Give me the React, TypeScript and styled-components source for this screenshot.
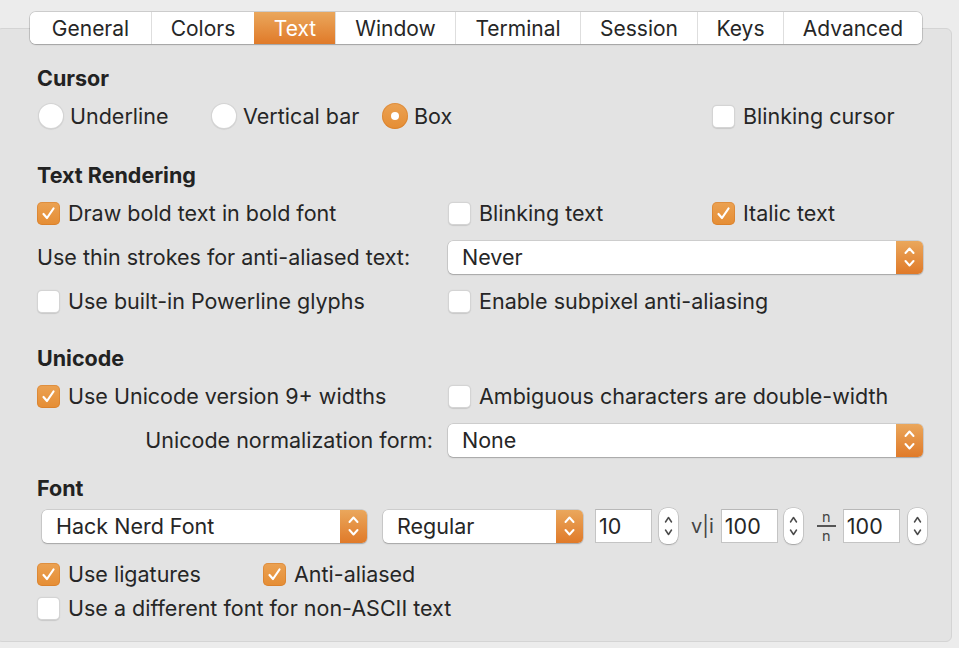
import React from 'react';
import styled, { createGlobalStyle } from 'styled-components';

const GlobalStyle = createGlobalStyle`
  html, body {
    margin: 0;
    padding: 0;
    background: #ececec;
  }
  body {
    font-family: Inter, "Noto Sans", "Liberation Sans", sans-serif;
    color: #262626;
    -webkit-font-smoothing: antialiased;
  }
`;

const Window = styled.div`
  width: 959px;
  height: 648px;
  overflow: hidden;
  padding-top: 12px;
  box-sizing: border-box;
  background: #ececec;
`;

const TabBar = styled.div`
  position: relative;
  z-index: 1;
  display: flex;
  justify-content: center;
  width: 952px;
  margin-bottom: -16px;
`;

const Tabs = styled.div`
  display: flex;
  height: 32px;
  background: #fff;
  border-radius: 6px;
  box-shadow: 0 0 0 1px rgba(0, 0, 0, 0.13), 0 1px 1.5px rgba(0, 0, 0, 0.18);
  overflow: hidden;
`;

const Tab = styled.div<{ $w: number; $active?: boolean }>`
  width: ${(p) => p.$w}px;
  display: flex;
  align-items: center;
  justify-content: center;
  font-size: 21px;
  color: ${(p) => (p.$active ? '#fff' : '#262626')};
  background: ${(p) => (p.$active ? 'linear-gradient(#eaa75c, #e07a29)' : '#fff')};
  border-left: 1px solid ${(p) => (p.$active ? 'transparent' : '#dedede')};
  box-sizing: border-box;

  &:first-child {
    border-left: none;
  }
`;

const Panel = styled.div`
  margin-left: -4px;
  width: 956px;
  height: 614px;
  box-sizing: border-box;
  padding: 36px 28px 0 41px;
  background: #e3e3e3;
  border: 1px solid #d4d4d4;
  border-radius: 6px;
`;

const Section = styled.section<{ $mt?: number }>`
  margin-top: ${(p) => p.$mt ?? 0}px;
`;

const Heading = styled.h3`
  margin: 0 0 8px -1px;
  height: 26px;
  line-height: 26px;
  font-size: 21.5px;
  font-weight: 700;
  color: #222;
`;

const Grid = styled.div`
  display: grid;
  grid-template-columns: 411px 264px 1fr;
  grid-auto-rows: 34px;
  row-gap: 10px;
  margin-left: -1px;
`;

const Cell = styled.div<{ $span?: string; $end?: boolean }>`
  display: flex;
  align-items: center;
  grid-column: ${(p) => p.$span ?? 'auto'};
  justify-content: ${(p) => (p.$end ? 'flex-end' : 'flex-start')};
  padding-right: ${(p) => (p.$end ? '15px' : '0')};
`;

const Label = styled.span`
  font-size: 21.5px;
  color: #262626;
  white-space: nowrap;
`;

const Option = styled.label<{ $w?: number }>`
  display: flex;
  align-items: center;
  gap: 8px;
  width: ${(p) => (p.$w ? `${p.$w}px` : 'auto')};
  flex: none;
`;

const Box = styled.span<{ $on?: boolean }>`
  width: 23px;
  height: 23px;
  border-radius: 5px;
  box-sizing: border-box;
  display: flex;
  align-items: center;
  justify-content: center;
  background: ${(p) => (p.$on ? 'linear-gradient(#eba253, #e58d34)' : '#fff')};
  box-shadow: ${(p) =>
    p.$on
      ? 'inset 0 0 0 1px rgba(200, 110, 30, 0.35)'
      : 'inset 0 0 0 1px rgba(0, 0, 0, 0.17), 0 0.5px 1px rgba(0, 0, 0, 0.12)'};
`;

const RadioDot = styled.span<{ $on?: boolean }>`
  width: 26px;
  height: 26px;
  border-radius: 50%;
  box-sizing: border-box;
  display: flex;
  align-items: center;
  justify-content: center;
  background: ${(p) => (p.$on ? 'linear-gradient(#eba253, #e58d34)' : '#fff')};
  box-shadow: ${(p) =>
    p.$on
      ? 'inset 0 0 0 1px rgba(200, 110, 30, 0.35)'
      : 'inset 0 0 0 1px rgba(0, 0, 0, 0.17), 0 0.5px 1px rgba(0, 0, 0, 0.12)'};

  &::after {
    content: '';
    display: ${(p) => (p.$on ? 'block' : 'none')};
    width: 8px;
    height: 8px;
    border-radius: 50%;
    background: #fff;
  }
`;

const RadioOption = styled(Option)`
  gap: 6px;
`;

const Flow = styled.div`
  display: flex;
  align-items: center;
  margin-left: 1px;
`;

const Select = styled.div<{ $w?: number; $ml?: number }>`
  display: flex;
  align-items: stretch;
  height: 33px;
  width: ${(p) => (p.$w ? `${p.$w}px` : '100%')};
  margin-left: ${(p) => p.$ml ?? 0}px;
  flex: none;
  background: #fff;
  border-radius: 5px;
  box-shadow: 0 0 0 0.5px rgba(0, 0, 0, 0.18), 0 1px 1.5px rgba(0, 0, 0, 0.2);
  overflow: hidden;
`;

const SelectValue = styled.span`
  flex: 1;
  display: flex;
  align-items: center;
  padding-left: 14px;
  font-size: 21.5px;
  color: #262626;
`;

const SelectArrow = styled.span`
  width: 27px;
  display: flex;
  align-items: center;
  justify-content: center;
  background: linear-gradient(#eaa75c, #e07a29);
`;

const FontRow = styled.div`
  display: flex;
  align-items: center;
  height: 34px;
  margin-left: 4px;
`;

const Field = styled.div<{ $ml: number }>`
  margin-left: ${(p) => p.$ml}px;
  width: 57px;
  height: 34px;
  box-sizing: border-box;
  border: 1px solid #c4c4c4;
  border-top-color: #b8b8b8;
  background: #fff;
  display: flex;
  align-items: center;
  padding-left: 3px;
  font-size: 21.5px;
  flex: none;
`;

const Stepper = styled.div<{ $ml: number }>`
  margin-left: ${(p) => p.$ml}px;
  width: 19px;
  height: 36px;
  box-sizing: border-box;
  border-radius: 8px;
  background: #fff;
  box-shadow: 0 0 0 0.5px rgba(0, 0, 0, 0.2), 0 1px 1.5px rgba(0, 0, 0, 0.2);
  display: flex;
  align-items: center;
  justify-content: center;
  flex: none;
`;

const Glyph = styled.span<{ $ml: number }>`
  margin-left: ${(p) => p.$ml}px;
  font-size: 20px;
  color: #444;
  flex: none;
`;

const Fraction = styled.span<{ $ml: number }>`
  margin-left: ${(p) => p.$ml}px;
  display: flex;
  flex-direction: column;
  align-items: center;
  width: 19px;
  color: #444;
  flex: none;
`;

const FracPart = styled.span`
  display: block;
  height: 13px;
  line-height: 13px;
  font-size: 14.5px;
`;

const FracBar = styled.span`
  display: block;
  width: 19px;
  height: 1.5px;
  background: #555;
  margin: 2px 0;
`;

const CheckStack = styled.div`
  margin-top: 14px;
  margin-left: -1px;
  display: flex;
  flex-direction: column;
`;

const StackRow = styled.div`
  display: flex;
  align-items: center;
  height: 34px;
`;

const CheckMark = () => (
  <svg width="15" height="15" viewBox="0 0 15 15">
    <path d="M2.5 8 L6 12 L12.5 2.5" stroke="#fff" strokeWidth="2.2" fill="none" strokeLinecap="round" strokeLinejoin="round" />
  </svg>
);

const UpDown = ({ color, w, sw }: { color: string; w: number; sw: number }) => (
  <svg width={w} height="22" viewBox={`0 0 ${w} 22`}>
    <path
      d={`M1.5 7 L${w / 2} 2.5 L${w - 1.5} 7 M1.5 15 L${w / 2} 19.5 L${w - 1.5} 15`}
      stroke={color}
      strokeWidth={sw}
      fill="none"
      strokeLinecap="round"
      strokeLinejoin="round"
    />
  </svg>
);

const Check = ({ label, on, w }: { label: string; on?: boolean; w?: number }) => (
  <Option $w={w}>
    <Box $on={on}>{on && <CheckMark />}</Box>
    <Label>{label}</Label>
  </Option>
);

const Radio = ({ label, on, w }: { label: string; on?: boolean; w?: number }) => (
  <RadioOption $w={w}>
    <RadioDot $on={on} />
    <Label>{label}</Label>
  </RadioOption>
);

const Popup = ({ value, w, ml }: { value: string; w?: number; ml?: number }) => (
  <Select $w={w} $ml={ml}>
    <SelectValue>{value}</SelectValue>
    <SelectArrow>
      <UpDown color="#fff" w={11} sw={2} />
    </SelectArrow>
  </Select>
);

const Spin = ({ ml }: { ml: number }) => (
  <Stepper $ml={ml}>
    <UpDown color="#4a4a4a" w={9} sw={1.5} />
  </Stepper>
);

const tabs: [string, number][] = [
  ['General', 121],
  ['Colors', 103],
  ['Text', 81],
  ['Window', 120],
  ['Terminal', 125],
  ['Session', 117],
  ['Keys', 86],
  ['Advanced', 139],
];

export default function App() {
  return (
    <Window>
      <GlobalStyle />
      <TabBar>
        <Tabs>
          {tabs.map(([name, w]) => (
            <Tab key={name} $w={w} $active={name === 'Text'}>
              {name}
            </Tab>
          ))}
        </Tabs>
      </TabBar>
      <Panel>
        <Section>
          <Heading>Cursor</Heading>
          <Grid>
            <Cell>
              <Flow>
                <Radio label="Underline" w={173} />
                <Radio label="Vertical bar" w={171} />
                <Radio label="Box" on />
              </Flow>
            </Cell>
            <Cell $span="3">
              <Check label="Blinking cursor" />
            </Cell>
          </Grid>
        </Section>

        <Section $mt={29}>
          <Heading>Text Rendering</Heading>
          <Grid>
            <Cell>
              <Check label="Draw bold text in bold font" on />
            </Cell>
            <Cell>
              <Check label="Blinking text" />
            </Cell>
            <Cell>
              <Check label="Italic text" on />
            </Cell>
            <Cell>
              <Label>Use thin strokes for anti-aliased text:</Label>
            </Cell>
            <Cell $span="2 / 4">
              <Popup value="Never" />
            </Cell>
            <Cell>
              <Check label="Use built-in Powerline glyphs" />
            </Cell>
            <Cell $span="2 / 4">
              <Check label="Enable subpixel anti-aliasing" />
            </Cell>
          </Grid>
        </Section>

        <Section $mt={27}>
          <Heading>Unicode</Heading>
          <Grid>
            <Cell>
              <Check label="Use Unicode version 9+ widths" on />
            </Cell>
            <Cell $span="2 / 4">
              <Check label="Ambiguous characters are double-width" />
            </Cell>
            <Cell $end>
              <Label>Unicode normalization form:</Label>
            </Cell>
            <Cell $span="2 / 4">
              <Popup value="None" />
            </Cell>
          </Grid>
        </Section>

        <Section $mt={18}>
          <Heading>Font</Heading>
          <FontRow>
            <Popup value="Hack Nerd Font" w={325} />
            <Popup value="Regular" w={200} ml={16} />
            <Field $ml={12}>10</Field>
            <Spin ml={7} />
            <Glyph $ml={13}>v|i</Glyph>
            <Field $ml={7}>100</Field>
            <Spin ml={6} />
            <Fraction $ml={14}>
              <FracPart>n</FracPart>
              <FracBar />
              <FracPart>n</FracPart>
            </Fraction>
            <Field $ml={7}>100</Field>
            <Spin ml={8} />
          </FontRow>
          <CheckStack>
            <StackRow>
              <Check label="Use ligatures" on w={226} />
              <Check label="Anti-aliased" on />
            </StackRow>
            <StackRow>
              <Check label="Use a different font for non-ASCII text" />
            </StackRow>
          </CheckStack>
        </Section>
      </Panel>
    </Window>
  );
}
